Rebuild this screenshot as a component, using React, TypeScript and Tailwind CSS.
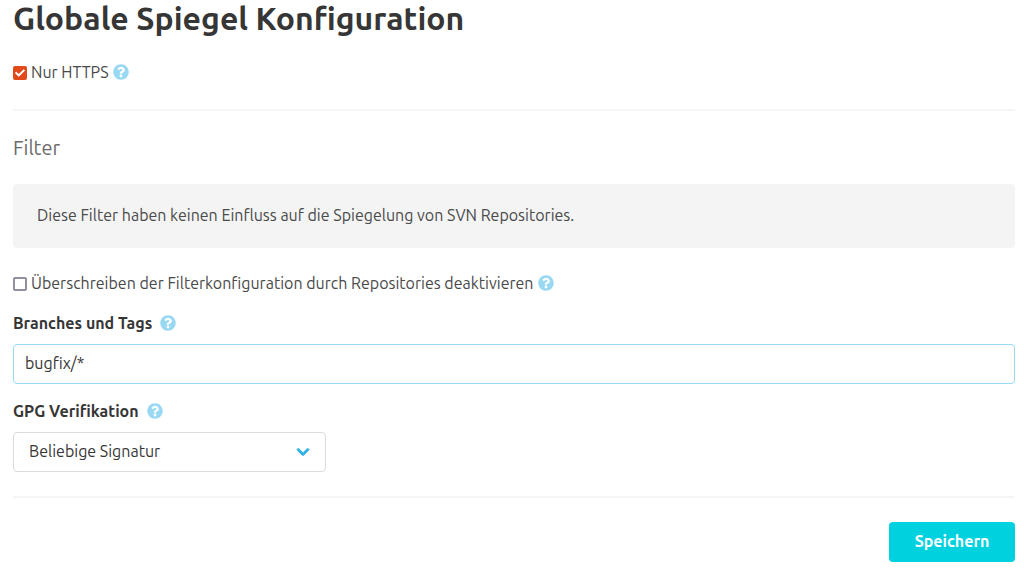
import { useState } from "react";
import type { InputHTMLAttributes } from "react";
import { FaCheck, FaChevronDown, FaQuestionCircle } from "react-icons/fa";

function Help() {
  return <FaQuestionCircle aria-hidden="true" className="size-4 shrink-0 text-[#98d8f3]" />;
}

function Checkbox({ id, ...props }: InputHTMLAttributes<HTMLInputElement>) {
  return (
    <span className="grid shrink-0 place-items-center pt-0.5">
      <input
        id={id}
        type="checkbox"
        className="peer col-start-1 row-start-1 size-3.5 appearance-none rounded-xs border-2 border-[#8f8f9d] bg-white checked:border-[#e2491b] checked:bg-[#e2491b]"
        {...props}
      />
      <FaCheck
        aria-hidden="true"
        className="pointer-events-none invisible col-start-1 row-start-1 size-2.5 text-white peer-checked:visible"
      />
    </span>
  );
}

export default function App() {
  const [httpsOnly, setHttpsOnly] = useState(true);
  const [locked, setLocked] = useState(false);
  const [patterns, setPatterns] = useState("bugfix/*");

  return (
    <form
      className="bg-white pr-[9px] pl-[13px] font-['Ubuntu','Noto_Sans',sans-serif] text-base leading-6 text-[#4a4a4a]"
      onSubmit={(event) => event.preventDefault()}
    >
      <h1 className="text-[32px] leading-9 font-bold text-[#363636]">Globale Spiegel Konfiguration</h1>

      <div className="mt-6 flex items-center gap-1">
        <Checkbox id="https" checked={httpsOnly} onChange={(e) => setHttpsOnly(e.target.checked)} />
        <label htmlFor="https">Nur HTTPS</label>
        <Help />
      </div>

      <hr className="mt-[25px] mb-6 h-0.5 border-0 bg-[#f5f5f5]" />

      <h2 className="text-xl leading-[25px] text-[#6b6b6b]">Filter</h2>
      <p className="mt-6 rounded bg-[#f4f4f4] px-6 pt-[19px] pb-[21px]">
        Diese Filter haben keinen Einfluss auf die Spiegelung von SVN Repositories.
      </p>

      <div className="mt-[23px] flex items-center gap-1">
        <Checkbox id="locked" checked={locked} onChange={(e) => setLocked(e.target.checked)} />
        <label htmlFor="locked">Überschreiben der Filterkonfiguration durch Repositories deaktivieren</label>
        <Help />
      </div>

      <div className="mt-4 flex items-center gap-2">
        <label htmlFor="patterns" className="font-bold text-[#363636]">Branches und Tags</label>
        <Help />
      </div>
      <input
        id="patterns"
        type="text"
        value={patterns}
        onChange={(e) => setPatterns(e.target.value)}
        className="mt-[9px] block h-10 w-full rounded border border-[#98d8f3] bg-white px-[11px] pb-0.5 text-[#363636] outline-none"
      />

      <div className="mt-[15px] flex items-center gap-2">
        <label htmlFor="gpg" className="font-bold text-[#363636]">GPG Verifikation</label>
        <Help />
      </div>
      <div className="mt-[9px] grid w-[313px] max-w-full items-center">
        <select
          id="gpg"
          className="col-start-1 row-start-1 h-10 w-full appearance-none rounded border border-[#dbdbdb] bg-white pr-10 pb-0.5 pl-[15px] text-[#363636]"
        >
          <option>Beliebige Signatur</option>
        </select>
        <FaChevronDown
          aria-hidden="true"
          className="pointer-events-none col-start-1 row-start-1 mr-4 size-3.5 justify-self-end stroke-current stroke-[32px] text-[#33b2e8]"
        />
      </div>

      <hr className="my-6 h-0.5 border-0 bg-[#f5f5f5]" />

      <div className="flex justify-end">
        <button type="submit" className="h-10 min-w-[126px] rounded bg-[#00d1df] px-6 pb-0.5 font-bold text-white">
          Speichern
        </button>
      </div>
    </form>
  );
}
